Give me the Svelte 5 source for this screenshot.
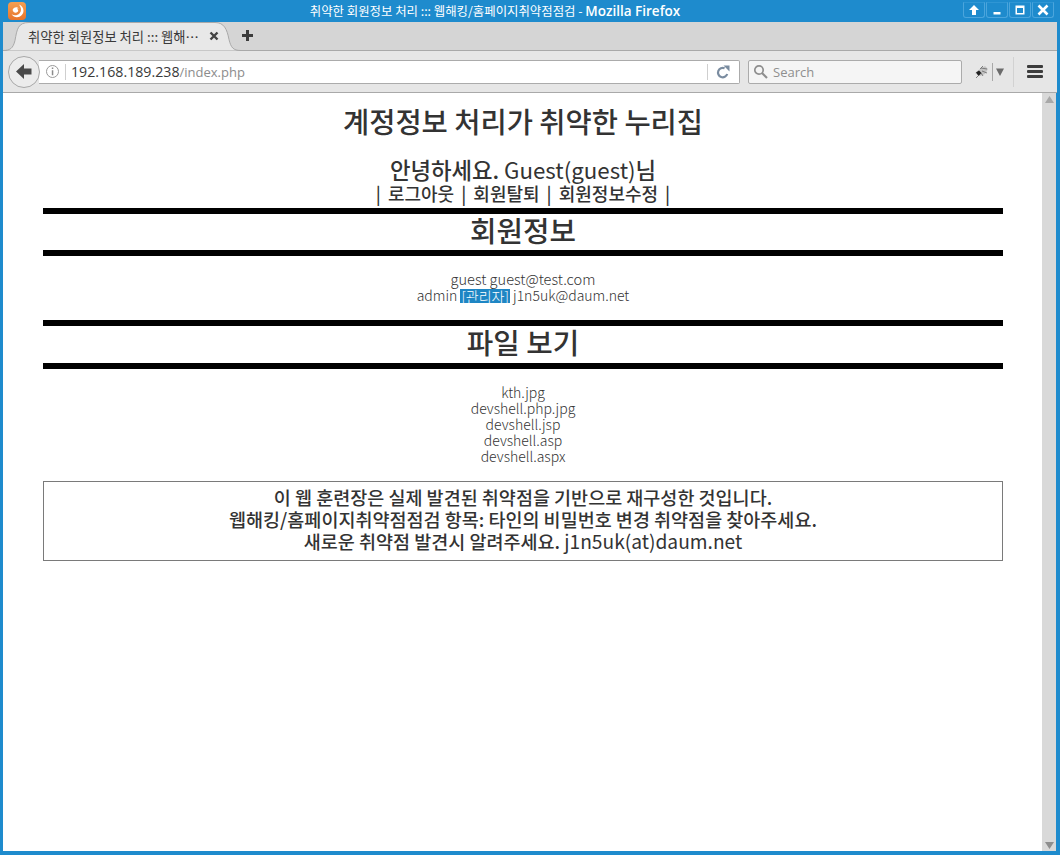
<script>
  const members = [
    { id: 'guest', mail: 'guest@test.com' },
    { id: 'admin', admin: true, mail: 'j1n5uk@daum.net' }
  ];
  const files = ['kth.jpg', 'devshell.php.jpg', 'devshell.jsp', 'devshell.asp', 'devshell.aspx'];
</script>

<div class="window">
  <header class="titlebar">
    <div class="app-icon">
      <svg width="18" height="18" viewBox="0 0 18 18">
        <path d="M11 2.500c2.800 1 4.500 3.500 4.500 6.300 0 3.600-2.900 6.400-6.500 6.400-2.200 0-4.200-1.100-5.400-2.900 1.600 1 3.600 1.300 5.400.7 2.400-.8 4-2.800 4-5.200 0-2-.8-3.800-2-5.300z" fill="#fff"/>
        <path d="M4.500 8.300C5 6.200 6.800 5 8.800 5.200c.9.100 1.600.7 1.800 1.500-.6-.3-1.300-.3-1.900 0 .9.300 1.500 1 1.500 1.900 0 1.300-1.200 2.200-2.600 2.200-1.400 0-2.600-.9-2.600-2.200 0-.1-.2-.2-.5-.3z" fill="#fff"/>
      </svg>
    </div>
    <div class="win-title">취약한 회원정보 처리 ::: 웹해킹/홈페이지취약점점검 - <b>Mozilla Firefox</b></div>
    <div class="win-buttons">
      <span class="win-btn"><svg width="12" height="12" viewBox="0 0 12 12"><path d="M6 1 1 6h3v5h4V6h3z" fill="#fff"/></svg></span>
      <span class="win-btn"><svg width="12" height="12" viewBox="0 0 12 12"><path d="M2.500 8h7v2.500h-7z" fill="#fff"/></svg></span>
      <span class="win-btn"><svg width="12" height="12" viewBox="0 0 12 12"><path d="M1.500 1.500h9v9h-9zM3 4v5h6V4z" fill="#fff" fill-rule="evenodd"/></svg></span>
      <span class="win-btn"><svg width="12" height="12" viewBox="0 0 12 12"><path d="m1.500 1.500 9 9M10.500 1.500l-9 9" stroke="#fff" stroke-width="2.600"/></svg></span>
    </div>
  </header>

  <div class="tabstrip">
    <div class="tab">
      <svg class="tab-shape" width="238" height="30" viewBox="0 0 238 30">
        <path d="M0 29.500c7 0 10-2 12-10C14 8 15 1.500 26 1.500h186c9 0 12 6.500 14 17 2 8 4 11 12 11" fill="#e8e8e8" stroke="#a9a9a9"/>
      </svg>
      <span class="tab-label">취약한 회원정보 처리 ::: 웹해…</span>
      <svg class="tab-close" width="10" height="10" viewBox="0 0 10 10"><path d="m1.500 1.500 7 7M8.500 1.500l-7 7" stroke="#444" stroke-width="2.400"/></svg>
    </div>
    <svg class="new-tab" width="11" height="11" viewBox="0 0 11 11"><path d="M4 0h3v4h4v3H7v4H4V7H0V4h4z" fill="#3c3c3c"/></svg>
  </div>

  <nav class="navbar">
    <div class="back">
      <svg width="16" height="15" viewBox="0 0 16 15"><path d="M8 0 0 7.500 8 15v-4.500h7.500v-6H8z" fill="#4a4a4a"/></svg>
    </div>
    <div class="urlbar">
      <svg class="info" width="15" height="15" viewBox="0 0 15 15">
        <circle cx="7.500" cy="7.500" r="6" fill="none" stroke="#9a9a9a"/>
        <path d="M6.800 3.500h1.500V5H6.800zM6.800 6.300h1.500v5H6.800z" fill="#8a8a8a"/>
      </svg>
      <span class="sep"></span>
      <span class="url">192.168.189.238<span class="url-path">/index.php</span></span>
      <span class="sep end"></span>
      <svg class="reload" width="14" height="14" viewBox="0 0 14 14">
        <path d="M11.200 9A4.700 4.700 0 1 1 8.600 3.300" fill="none" stroke="#7a8ca0" stroke-width="2.200"/>
        <path d="M7.500 .5h6v6z" fill="#7a8ca0"/>
      </svg>
    </div>
    <div class="searchbar">
      <svg width="15" height="15" viewBox="0 0 15 15">
        <circle cx="6" cy="6" r="4.200" fill="none" stroke="#8e8e8e" stroke-width="1.700"/>
        <path d="m9 9 5 5" stroke="#8e8e8e" stroke-width="2.200"/>
      </svg>
      <span>Search</span>
    </div>
    <div class="addon">
      <svg width="15" height="14" viewBox="0 0 15 14">
        <path d="M1 8 6 4l5-3 3 3-3 5-5 2z" fill="#c4c4c4"/>
        <path d="m2 7.500 3-2 2.500 2.500-3 3z" fill="#222"/>
        <path d="M7 3l6 1M6 4l3-3M8 6l5 2M4 11 2 13M7 8l2 3" stroke="#666" stroke-width=".8"/>
      </svg>
      <span class="addon-sep"></span>
      <svg width="8" height="8" viewBox="0 0 8 8"><path d="M0 .5h8L4 8z" fill="#6b6b6b"/></svg>
    </div>
    <div class="menu">
      <span></span><span></span><span></span>
    </div>
  </nav>

  <div class="viewport">
    <main class="page">
      <h1>계정정보 처리가 취약한 누리집</h1>
      <div class="hello"><span class="greet">안녕하세요.</span> Guest(guest)<span class="greet">님</span></div>
      <div class="links">| 로그아웃 | 회원탈퇴 | 회원정보수정 |</div>
      <hr />
      <h2>회원정보</h2>
      <hr />
      <div class="list members">
        {#each members as m}
          <div class:admin-row={m.admin}>{m.id}{' '}{#if m.admin}<span class="admin">[관리자]</span>{' '}{/if}{m.mail}</div>
        {/each}
      </div>
      <hr />
      <h2 class="files-title">파일 보기</h2>
      <hr />
      <div class="list files">
        {#each files as f}
          <div>{f}</div>
        {/each}
      </div>
      <div class="notice">
        <div>이 웹 훈련장은 실제 발견된 취약점을 기반으로 재구성한 것입니다.</div>
        <div>웹해킹/홈페이지취약점점검 항목: 타인의 비밀번호 변경 취약점을 찾아주세요.</div>
        <div>새로운 취약점 발견시 알려주세요. <span class="mail">j1n5uk(at)daum.net</span></div>
      </div>
    </main>
    <aside class="scrollbar">
      <svg width="9" height="7" viewBox="0 0 9 7"><path d="M4.500 0 9 7H0z" fill="#a8a8a8"/></svg>
      <svg width="9" height="7" viewBox="0 0 9 7"><path d="M4.500 7 9 0H0z" fill="#8e8e8e"/></svg>
    </aside>
  </div>
</div>

<style>
  :global(body) {
    margin: 0;
    background: #1e8bcd;
  }

  .window {
    width: 1060px;
    height: 855px;
    box-sizing: border-box;
    display: flex;
    flex-direction: column;
    background: #1e8bcd;
    border: solid #1e8bcd;
    border-width: 0 3px 4px 3px;
    font-family: "Noto Sans CJK KR", "Noto Sans", sans-serif;
    overflow: hidden;
  }

  /* title bar */
  .titlebar {
    height: 22px;
    flex: none;
    display: flex;
    align-items: center;
    color: #fff;
    font-size: 12.400px;
  }

  .app-icon {
    width: 18px;
    height: 18px;
    margin-left: 5px;
    background: linear-gradient(#f4a052, #e8742a);
    border-radius: 4px;
    display: flex;
  }

  .win-title {
    flex: 1;
    text-align: center;
    padding-left: 1px;
    white-space: nowrap;
  }

  .win-title b {
    font-family: "Open Sans", sans-serif;
    font-size: 13.500px;
    font-weight: 600;
  }

  .win-buttons {
    display: flex;
    gap: 1px;
    margin-right: 3px;
    align-self: flex-start;
    margin-top: 2px;
  }

  .win-btn {
    width: 22px;
    height: 16px;
    box-sizing: border-box;
    display: flex;
    align-items: center;
    justify-content: center;
    border: 1px solid #4ba5dc;
    border-top-color: #2f96d4;
    border-radius: 0 0 3px 3px;
  }

  /* tabs */
  .tabstrip {
    height: 29px;
    flex: none;
    background: #d5d5d5;
    display: flex;
    align-items: flex-end;
    border-bottom: 1px solid #a9a9a9;
    box-sizing: border-box;
  }

  .tab {
    width: 238px;
    height: 30px;
    margin-bottom: -1px;
    position: relative;
    display: flex;
    align-items: center;
    flex: none;
  }

  .tab-shape {
    position: absolute;
    left: 0;
    top: 0;
  }

  .tab-label {
    position: relative;
    margin-left: 25px;
    width: 181px;
    font-size: 13.300px;
    color: #3a3a3a;
    white-space: nowrap;
  }

  .tab-close {
    position: relative;
  }

  .new-tab {
    margin: 0 0 9px 1px;
  }

  /* nav bar */
  .navbar {
    height: 42px;
    flex: none;
    box-sizing: border-box;
    background: #e6e6e6;
    border-bottom: 1px solid #a9a9a9;
    display: flex;
    align-items: center;
  }

  .back {
    width: 32px;
    height: 32px;
    margin-left: 5px;
    flex: none;
    box-sizing: border-box;
    border: 1px solid #a8a8a8;
    border-radius: 50%;
    background: #ececec;
    display: flex;
    align-items: center;
    justify-content: center;
    position: relative;
    z-index: 1;
  }

  .urlbar {
    width: 701px;
    height: 24px;
    margin-left: -1px;
    flex: none;
    box-sizing: border-box;
    background: #fff;
    border: 1px solid #ababab;
    border-left: none;
    border-radius: 0 2px 2px 0;
    display: flex;
    align-items: center;
    padding-left: 6px;
  }

  .sep {
    width: 1px;
    height: 16px;
    background: #cfcfcf;
    margin: 0 5px 0 5px;
  }

  .sep.end {
    margin: 0 8px 0 auto;
  }

  .url {
    font-family: "Open Sans", sans-serif;
    font-size: 14.200px;
    color: #3a3a3a;
  }

  .url-path {
    font-size: 13px;
    color: #8c8c8c;
  }

  .reload {
    margin-right: 9px;
  }

  .searchbar {
    width: 214px;
    height: 24px;
    margin-left: 8px;
    flex: none;
    box-sizing: border-box;
    background: #f5f5f5;
    border: 1px solid #ababab;
    border-radius: 2px;
    display: flex;
    align-items: center;
    gap: 5px;
    padding-left: 4px;
    font-family: "Open Sans", sans-serif;
    font-size: 13px;
    color: #8f8f8f;
  }

  .addon {
    width: 40px;
    height: 30px;
    margin-left: 12px;
    flex: none;
    box-sizing: border-box;
    border-right: 1px solid #d2d2d2;
    display: flex;
    align-items: center;
    gap: 3px;
  }

  .addon-sep {
    width: 1px;
    height: 18px;
    background: #a8a8a8;
  }

  .menu {
    width: 16px;
    margin-left: 13px;
    display: flex;
    flex-direction: column;
    gap: 2px;
  }

  .menu span {
    height: 3px;
    border-radius: 1px;
    background: #3c3c3c;
  }

  /* page */
  .viewport {
    flex: 1;
    display: flex;
    min-height: 0;
  }

  .page {
    flex: 1;
    background: #fff;
    padding: 0 39px 0 40px;
    color: #333;
    text-align: center;
  }

  h1 {
    margin: 10px 0 0;
    font-size: 28.500px;
    line-height: 36px;
    font-weight: 500;
  }

  .hello {
    margin-top: 17px;
    font-size: 22.300px;
    line-height: 26px;
    font-weight: 400;
  }

  .greet {
    font-weight: 500;
  }

  .links {
    font-size: 18px;
    line-height: 23px;
    font-weight: 500;
    word-spacing: 3px;
    padding-bottom: 3px;
  }

  hr {
    height: 6px;
    margin: 0;
    border: none;
    background: #000;
  }

  h2 {
    margin: 0;
    font-size: 28.800px;
    line-height: 31px;
    padding-bottom: 5px;
    font-weight: 500;
  }

  .files-title {
    padding-bottom: 6px;
  }

  .list {
    font-size: 14px;
    line-height: 16px;
    font-weight: 300;
  }

  .members {
    padding: 15px 0 17px;
    font-size: 14.600px;
  }

  .admin-row {
    font-size: 14px;
  }

  .files {
    padding: 15px 0 17px;
  }

  .admin {
    display: inline-block;
    height: 14px;
    line-height: 14px;
    padding: 0 1px;
    background: #1e86c4;
    color: #fff;
    font-size: 14px;
    vertical-align: -1px;
  }

  .notice {
    height: 80px;
    box-sizing: border-box;
    border: 1px solid #7a7a7a;
    font-size: 18.500px;
    line-height: 22px;
    padding-top: 4px;
    font-weight: 500;
  }

  .mail {
    font-weight: 400;
    font-size: 19.200px;
  }

  .scrollbar {
    width: 14px;
    margin-right: 1px;
    flex: none;
    background: #d9d9d9;
    display: flex;
    flex-direction: column;
    align-items: center;
    justify-content: space-between;
    padding: 3px 0 2px;
    box-sizing: border-box;
  }
</style>
